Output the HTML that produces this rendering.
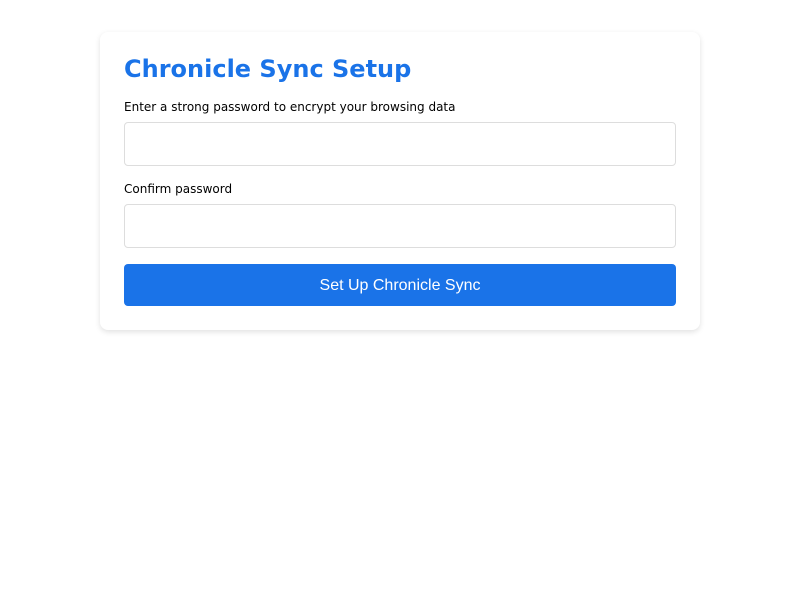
<!DOCTYPE html>
<html><head><meta charset="utf-8"><style>
body{margin:0;background:#fff;font-family:"DejaVu Sans",sans-serif;}
.card{position:absolute;left:100px;top:32px;width:552px;height:250px;padding:24px;background:#fff;border-radius:8px;box-shadow:0 2px 6px rgba(0,0,0,0.12);}
h1{margin:0;font-size:24px;font-weight:bold;color:#1a73e8;line-height:30px;position:absolute;top:22px;left:24px;}
.lbl{position:absolute;left:24px;font-size:12px;color:#000;line-height:16px;}
.inp{position:absolute;left:24px;width:550px;height:42px;border:1px solid #ddd;border-radius:4px;background:#fff;}
.btn{position:absolute;left:24px;top:232px;width:552px;height:42px;background:#1a73e8;border-radius:4px;color:#fff;font-family:"Liberation Sans",Arial,sans-serif;font-size:16px;text-align:center;line-height:44px;}
</style></head><body>
<div class="card">
<h1>Chronicle Sync Setup</h1>
<div class="lbl" style="top:67px">Enter a strong password to encrypt your browsing data</div>
<div class="inp" style="top:90px"></div>
<div class="lbl" style="top:149px">Confirm password</div>
<div class="inp" style="top:172px"></div>
<div class="btn">Set Up Chronicle Sync</div>
</div>
</body></html>
